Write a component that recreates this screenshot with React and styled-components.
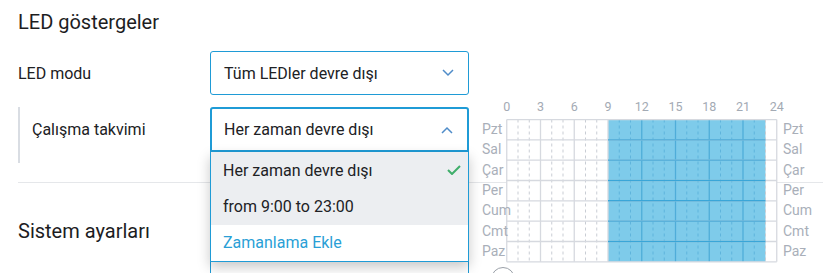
import React from 'react';
import styled, { createGlobalStyle } from 'styled-components';

const days = ['Pzt', 'Sal', 'Çar', 'Per', 'Cum', 'Cmt', 'Paz'];
const hourMarks = [0, 3, 6, 9, 12, 15, 18, 21, 24];
const activeFrom = 9;
const activeTo = 23;

const HOUR_W = 11.25;
const ROW_H = 20.33;
const GRID_W = 272;
const GRID_H = 144;

const GlobalStyle = createGlobalStyle`
  html, body {
    margin: 0;
    padding: 0;
    overflow: hidden;
    background: #ffffff;
  }
  body {
    font-family: Roboto, "Noto Sans", sans-serif;
    color: #202124;
  }
`;

const Chevron = ({ up }) => (
  <svg width="12" height="8" viewBox="0 0 12 8">
    <polyline
      points={up ? '1,7 6,2 11,7' : '1,1 6,6 11,1'}
      fill="none"
      stroke="#4f8cc9"
      strokeWidth="1.5"
    />
  </svg>
);

const Check = () => (
  <svg width="14" height="10" viewBox="0 0 14 10">
    <polyline points="1,5 5,9 13,1" fill="none" stroke="#3fae6b" strokeWidth="2" />
  </svg>
);

const ScheduleGrid = () => {
  const x = h => 0.75 + h * HOUR_W;
  const y = r => 0.5 + r * ROW_H;
  const inActive = h => h > activeFrom && h < activeTo;
  return (
    <svg width={GRID_W} height={GRID_H}>
      <rect x={x(0)} y={y(0)} width={24 * HOUR_W} height={7 * ROW_H} fill="#ffffff" />
      <rect
        x={x(activeFrom)}
        y={y(0)}
        width={(activeTo - activeFrom) * HOUR_W}
        height={7 * ROW_H}
        fill="#7ecbea"
      />
      {Array.from({ length: 25 }, (_, h) => (
        <line
          key={'v' + h}
          x1={x(h)}
          x2={x(h)}
          y1={y(0)}
          y2={y(7)}
          stroke={inActive(h) ? (h % 3 ? '#5fb4dc' : '#4fadd9') : (h % 3 ? '#c9cdd4' : '#d6d9df')}
          strokeWidth={h % 3 ? 1 : 1.3}
          strokeDasharray={h % 3 ? '3 3' : undefined}
        />
      ))}
      {Array.from({ length: 8 }, (_, r) => (
        <React.Fragment key={'h' + r}>
          <line x1={x(0)} x2={x(24)} y1={y(r)} y2={y(r)} stroke="#d6d9df" strokeWidth={r === 0 ? 1.6 : 1.3} />
          {r > 0 && r < 7 && (
            <line x1={x(activeFrom)} x2={x(activeTo)} y1={y(r)} y2={y(r)} stroke="#3aa6d8" strokeWidth="1.4" />
          )}
        </React.Fragment>
      ))}
    </svg>
  );
};

const App = () => (
  <>
    <GlobalStyle />
    <Page>
      <Heading>LED göstergeler</Heading>

      <FieldRow $gap={17}>
        <Label>LED modu</Label>
        <Select>
          <span>Tüm LEDler devre dışı</span>
          <Chevron />
        </Select>
      </FieldRow>

      <ScheduleRow>
        <RuledLabel>Çalışma takvimi</RuledLabel>
        <SelectWrap>
          <Select $open>
            <span>Her zaman devre dışı</span>
            <Chevron up />
          </Select>
          <Menu>
            <MenuItem $shaded>
              <span>Her zaman devre dışı</span>
              <Check />
            </MenuItem>
            <MenuItem $shaded>from 9:00 to 23:00</MenuItem>
            <MenuItem $link>Zamanlama Ekle</MenuItem>
          </Menu>
        </SelectWrap>

        <Schedule>
          <HourAxis>
            {hourMarks.map(h => (
              <HourLabel key={h}>{h}</HourLabel>
            ))}
          </HourAxis>
          <GridRow>
            <DayColumn>
              {days.map(d => (
                <DayLabel key={d}>{d}</DayLabel>
              ))}
            </DayColumn>
            <ScheduleGrid />
            <DayColumn $right>
              {days.map(d => (
                <DayLabel key={d}>{d}</DayLabel>
              ))}
            </DayColumn>
          </GridRow>
          <RoundButton />
        </Schedule>
      </ScheduleRow>

      <Divider />

      <Heading $gap={36}>Sistem ayarları</Heading>

      <FieldRow $gap={12}>
        <Label />
        <Select />
      </FieldRow>
    </Page>
  </>
);

export default App;

const Page = styled.div`
  padding: 10px 0 0 18px;
`;

const Heading = styled.h2`
  margin: ${p => p.$gap || 0}px 0 0;
  font-size: 20px;
  line-height: 24px;
  font-weight: 400;
  color: #1d1d1f;
`;

const FieldRow = styled.div`
  display: flex;
  align-items: center;
  margin-top: ${p => p.$gap}px;
`;

const Label = styled.div`
  width: 192px;
  flex-shrink: 0;
  font-size: 16px;
`;

const Select = styled.div`
  box-sizing: border-box;
  width: 259px;
  height: ${p => (p.$open ? 45 : 44)}px;
  display: flex;
  align-items: center;
  justify-content: space-between;
  padding: 0 14px 0 ${p => (p.$open ? 12 : 13)}px;
  border: ${p => (p.$open ? 2 : 1)}px solid #1f9bd6;
  border-radius: ${p => (p.$open ? '3px 3px 0 0' : '3px')};
  background: #ffffff;
  font-size: 16px;
  flex-shrink: 0;
`;

const ScheduleRow = styled.div`
  display: flex;
  align-items: flex-start;
  height: 56px;
  margin-top: 12px;
`;

const RuledLabel = styled.div`
  box-sizing: border-box;
  width: 192px;
  height: 56px;
  flex-shrink: 0;
  border-left: 2px solid #d9dde3;
  padding-left: 12px;
  line-height: 45px;
  font-size: 16px;
`;

const SelectWrap = styled.div`
  position: relative;
  width: 259px;
  flex-shrink: 0;
`;

const Menu = styled.div`
  position: absolute;
  top: 100%;
  left: 0;
  right: 0;
  z-index: 10;
  border: 1px solid #1f9bd6;
  border-top: none;
  background: #ffffff;
  box-shadow: 0 5px 12px rgba(0, 0, 0, 0.22);
`;

const MenuItem = styled.div`
  height: 36.4px;
  display: flex;
  align-items: center;
  justify-content: space-between;
  padding: 0 7px 0 12px;
  font-size: 16px;
  background: ${p => (p.$shaded ? '#eceef1' : '#ffffff')};
  color: ${p => (p.$link ? '#2a9fd6' : '#202124')};
`;

const Schedule = styled.div`
  display: flex;
  flex-direction: column;
  margin: -7px 0 0 13px;
  flex-shrink: 0;
`;

const HourAxis = styled.div`
  display: flex;
  margin-left: 8px;
`;

const HourLabel = styled.div`
  width: 33.75px;
  flex-shrink: 0;
  text-align: center;
  font-size: 12.5px;
  line-height: 14px;
  color: #a3aab4;
`;

const GridRow = styled.div`
  display: flex;
  margin-top: 5px;
`;

const DayColumn = styled.div`
  position: relative;
  z-index: 1;
  width: 24px;
  flex-shrink: 0;
  display: flex;
  flex-direction: column;
  margin-left: ${p => (p.$right ? 5 : 0)}px;
`;

const DayLabel = styled.div`
  height: ${ROW_H}px;
  line-height: ${ROW_H}px;
  font-size: 14px;
  color: #a9afb9;
  white-space: nowrap;
`;

const RoundButton = styled.div`
  width: 22px;
  height: 22px;
  margin: 4px 0 0 9px;
  border: 1.5px solid #9aa0a8;
  border-radius: 50%;
`;

const Divider = styled.div`
  height: 1px;
  margin-top: 19px;
  background-color: #e5e7ea;
`;
